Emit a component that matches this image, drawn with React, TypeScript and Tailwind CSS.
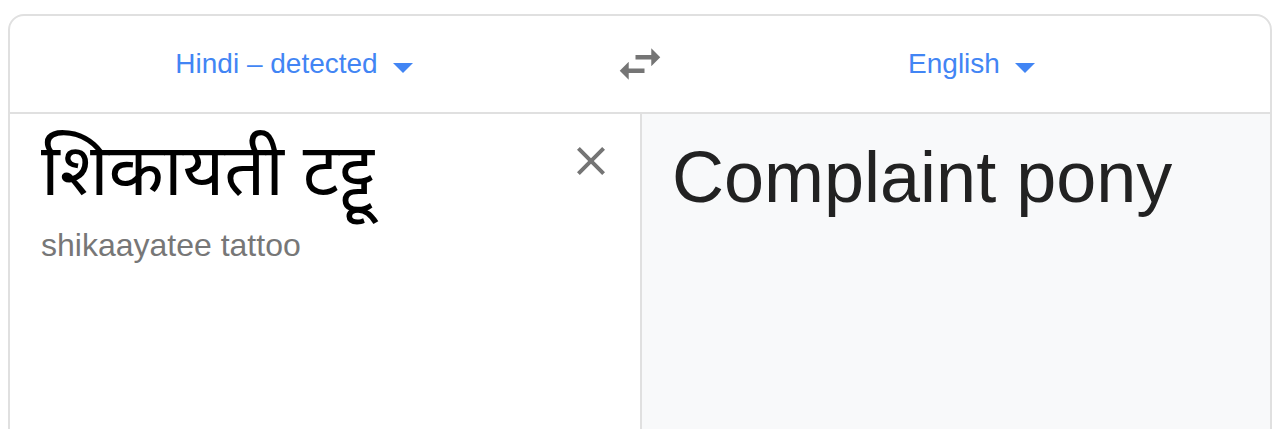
import React from "react";

const sans = "font-['Liberation_Sans',Arial,sans-serif]";

function DropArrow() {
  return (
    <svg
      viewBox="0 0 20 10"
      className="ml-[15px] mt-[8px] h-[10px] w-[20px] fill-[#4285f4]"
      aria-hidden
    >
      <path d="M0 0h20L10 10z" />
    </svg>
  );
}

function SwapIcon() {
  return (
    <svg viewBox="0 0 24 24" className="h-[54px] w-[54px] fill-[#757575]" aria-hidden>
      <path d="M6.99 11L3 15l3.99 4v-3H14v-2H6.99v-3zM21 9l-3.99-4v3H10v2h7.01v3L21 9z" />
    </svg>
  );
}

function CloseIcon() {
  return (
    <svg viewBox="0 0 24 24" className="h-[48px] w-[48px] fill-[#757575]" aria-hidden>
      <path d="M19 6.41L17.59 5 12 10.59 6.41 5 5 6.41 10.59 12 5 17.59 6.41 19 12 13.41 17.59 19 19 17.59 13.41 12z" />
    </svg>
  );
}

function LangButton({ label }: { label: string }) {
  return (
    <button className="flex items-center text-[28px] leading-[32px] text-[#4285f4]">
      <span>{label}</span>
      <DropArrow />
    </button>
  );
}

export default function App() {
  return (
    <div className={`min-h-screen bg-white pl-[8px] pr-[14px] pt-[14px] ${sans}`}>
      <div className="overflow-hidden rounded-[16px] border-2 border-[#e0e0e0] bg-white">
        {/* language bar */}
        <div className="flex h-[98px] items-center border-b-2 border-[#e0e0e0]">
          <div className="flex w-[568px] justify-center">
            <LangButton label="Hindi – detected" />
          </div>
          <div className="flex w-[124px] justify-center">
            <SwapIcon />
          </div>
          <div className="flex flex-1 justify-center pr-[29px]">
            <LangButton label="English" />
          </div>
        </div>

        {/* source / result panes */}
        <div className="flex min-h-[360px]">
          <div className="flex w-[632px] items-start border-r-2 border-[#e0e0e0] pl-[31px]">
            <div className="flex-1 pt-[15px]">
              <div
                lang="hi"
                className="font-['Noto_Sans_Devanagari','Noto_Sans',sans-serif] text-[72px] leading-[96px] text-black"
              >
                शिकायती टट्टू
              </div>
              <div className="text-[32px] leading-[40px] text-[#777777]">
                shikaayatee tattoo
              </div>
            </div>
            <button className="mr-[25px] mt-[23px]">
              <CloseIcon />
            </button>
          </div>
          <div className="flex-1 bg-[#f8f9fa] pl-[30px] pt-[15px]">
            <div className="text-[72px] leading-[96px] text-[#222222]">Complaint pony</div>
          </div>
        </div>
      </div>
    </div>
  );
}
